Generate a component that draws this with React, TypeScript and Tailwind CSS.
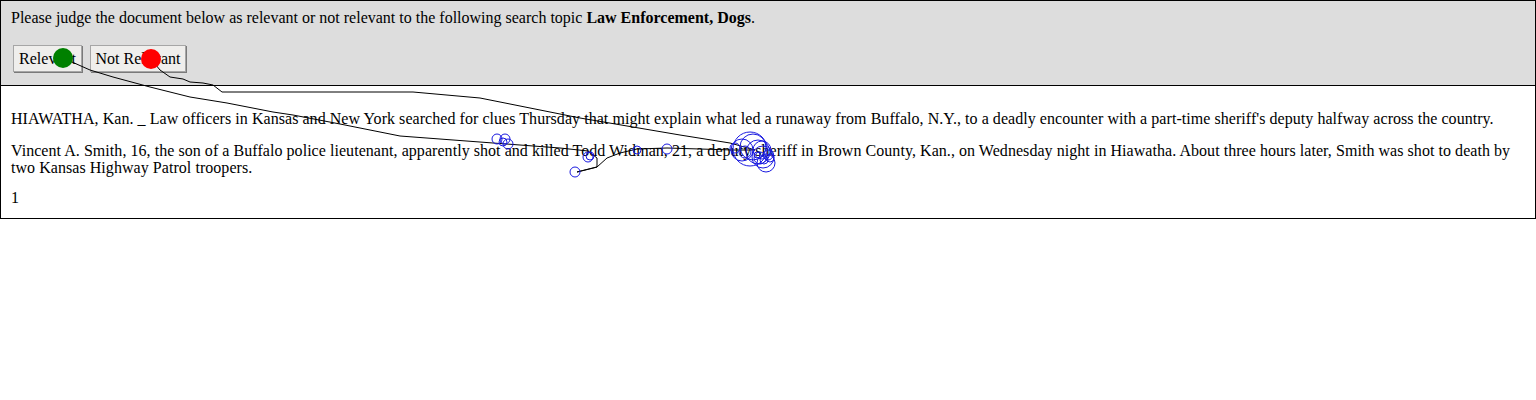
import React from 'react';

const serif = { fontFamily: '"Liberation Serif", "Times New Roman", serif' };

// gaze fixations drawn over the page (page coordinates)
const fixations: [number, number, number][] = [
  [497, 139, 5], [505, 139, 5], [508, 144, 5], [503, 142, 4],
  [588, 157, 5], [590, 156, 4], [575, 172, 5],
  [637, 150, 4], [667, 149, 5],
  [735, 148, 5], [742, 150, 11], [750, 149, 17], [753, 147, 13], [758, 152, 12],
  [762, 150, 9], [763, 157, 11], [766, 163, 9], [760, 158, 6], [768, 155, 5],
  [764, 160, 4], [757, 155, 3], [770, 158, 4], [745, 152, 6],
];

function GazeOverlay() {
  return (
    <svg className="absolute left-0 top-0 pointer-events-none" width={1536} height={230}>
      <polyline
        fill="none"
        stroke="#000"
        strokeWidth={1}
        points="151,59 160,70 170,77 183,79 190,82 203,83 213,85 222,92 413,92 480,98 580,118 680,135 730,143 755,150"
      />
      <polyline
        fill="none"
        stroke="#000"
        strokeWidth={1}
        points="63,58 90,70 113,77 150,87 190,97 227,103 273,112 293,115 340,124 400,136 493,143 560,148 588,151 597,158 597,167 577,172 597,167 607,158 620,153 637,149 667,148 733,150 755,150"
      />
      {fixations.map(([cx, cy, r], i) => (
        <circle key={i} cx={cx} cy={cy} r={r} fill="none" stroke="#1a1ae0" strokeWidth={1} />
      ))}
      <circle cx={63} cy={58} r={10} fill="#008000" />
      <circle cx={151} cy={59} r={10} fill="#ff0000" />
    </svg>
  );
}

export default function App() {
  return (
    <div className="relative w-[1536px] text-black text-[16px]" style={serif}>
      <div className="border border-black">
        {/* Judging header */}
        <div className="bg-[#dddddd] border-b border-black px-[10px] pt-[8px] pb-[13px]">
          <p className="leading-[17px]">
            Please judge the document below as relevant or not relevant to the following search topic{' '}
            <b>Law Enforcement, Dogs</b>.
          </p>
          <div className="flex gap-[8px] mt-[19px] ml-[2px]">
            <button className="w-[69px] h-[27px] bg-[#efeeec] border border-[#a6a6a6] shadow-[1px_1px_0_#7a7a7a] leading-[17px] text-[16px]">
              Relevant
            </button>
            <button className="w-[96px] h-[27px] bg-[#efeeec] border border-[#a6a6a6] shadow-[1px_1px_0_#7a7a7a] leading-[17px] text-[16px]">
              Not Relevant
            </button>
          </div>
        </div>

        {/* Document */}
        <div className="px-[10px] pt-[24px] pb-[12px] leading-[17px] tracking-[0.05px]">
          <p className="mb-[15px]">
            HIAWATHA, Kan. _ Law officers in Kansas and New York searched for clues Thursday that might explain what led a runaway from Buffalo, N.Y., to a deadly encounter with a part-time sheriff's deputy halfway across the country.
          </p>
          <p className="mb-[13px] pr-[10px]">
            Vincent A. Smith, 16, the son of a Buffalo police lieutenant, apparently shot and killed Todd Widman, 21, a deputy sheriff in Brown County, Kan., on Wednesday night in Hiawatha. About three hours later, Smith was shot to death by two Kansas Highway Patrol troopers.
          </p>
          <p>1</p>
        </div>
      </div>
      <GazeOverlay />
    </div>
  );
}
